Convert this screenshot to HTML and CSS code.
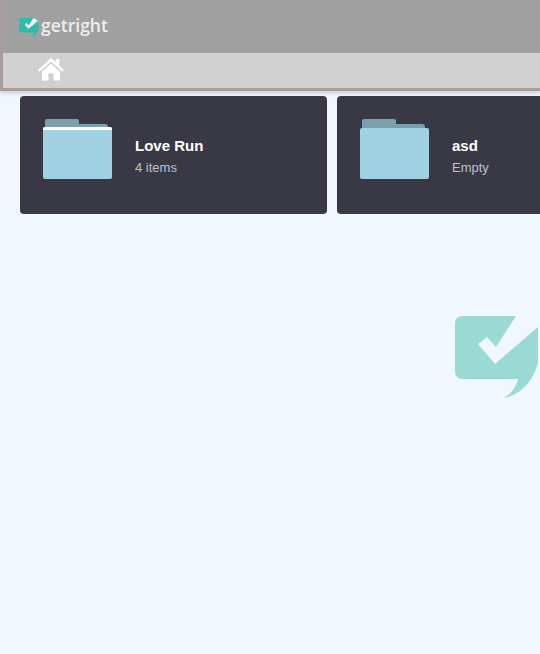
FILE: index.html
```html
<!DOCTYPE html>
<html lang="en">
<head>
<meta charset="utf-8">
<title>getright</title>
<link rel="stylesheet" href="styles.css">
</head>
<body>
<header class="top">
  <div class="brand">
    <svg class="brand-mark" viewBox="455 316 85 82" aria-hidden="true"><path class="brand-tick" d="M478 344 487 337 496 347 516 316 540 330 495 364Z"/><path d="M463 316H516L496 347 487 337 478 344 495 364 538 327V362C534 380 522 394 504 398 512 393 516 387 518 379H463Q455 379 455 371V324Q455 316 463 316Z"/></svg>
    <span class="brand-name">getright</span>
  </div>
  <nav class="crumbs">
    <svg class="home" viewBox="0 0 28 24" aria-hidden="true"><path d="M14 1 1 13l1.600 1.800L14 4.400l11.400 10.400L27 13l-4.600-4.200V2h-3.600v3.500Z"/><path d="M14 6.500 5 14.700V23.500h6.500V16.500h5V23.500H23V14.700Z"/></svg>
  </nav>
</header>
<main class="grid">
  <article class="card">
    <svg class="folder" viewBox="0 0 69 60" aria-hidden="true"><path class="folder-back" d="M2 6V2Q2 0 4 0H34Q36 0 36 2V5H62Q65 5 65 8V12H2Z"/><rect class="folder-front" x="0" y="8" width="69" height="52" rx="2"/><path class="folder-shine" d="M0 11V10Q0 8 2 8H67Q69 8 69 10V11Z"/></svg>
    <div class="info"><h2 class="name">Love Run</h2><p class="count">4 items</p></div>
  </article>
  <article class="card">
    <svg class="folder" viewBox="0 0 69 60" aria-hidden="true"><path class="folder-back" d="M2 6V2Q2 0 4 0H34Q36 0 36 2V5H62Q65 5 65 8V12H2Z"/><rect class="folder-front" x="0" y="9" width="69" height="51" rx="2"/></svg>
    <div class="info"><h2 class="name">asd</h2><p class="count">Empty</p></div>
  </article>
</main>
<svg class="watermark" viewBox="455 316 85 82" aria-hidden="true"><path d="M463 316H516L496 347 487 337 478 344 495 364 538 327V362C534 380 522 394 504 398 512 393 516 387 518 379H463Q455 379 455 371V324Q455 316 463 316Z"/></svg>
</body>
</html>
```
FILE: styles.css
```css
* { box-sizing: border-box; }
html, body { margin: 0; height: 100%; overflow: hidden; }
body { position: relative; background: #f0f7ff; font-family: "Liberation Sans", Arial, sans-serif; }

.top { border-style: solid; border-color: #a89e9e; border-width: 1px 0 3px 3px; box-shadow: 0 2px 4px rgba(120,120,120,.35); }
.brand { height: 50px; background: #a0a0a0; display: flex; align-items: center; padding: 0 0 0 16px; }
.brand-mark { width: 20px; height: 19px; fill: #2cbcab; flex: none; margin-top: 2px; }
.brand-tick { fill: #e8f4f2; }
.brand-name { font-family: "Open Sans", sans-serif; font-weight: 600; font-size: 17.500px; color: #eeeeee; margin: 0 0 3px 2px; line-height: 20px; }
.crumbs { height: 37px; background: #d0d0d0; border-top: 2px solid #a89e9e; display: flex; align-items: center; padding: 0 0 3px 34px; }
.home { width: 28px; height: 24px; fill: #ffffff; }

.grid { display: flex; gap: 10px; padding: 5px 0 0 20px; }
.card { flex: none; width: 307px; height: 118px; background: #393945; border-radius: 4px; display: flex; align-items: flex-start; padding: 23px 0 0 23px; }
.folder { width: 69px; height: 60px; flex: none; }
.folder-back { fill: #7ba0ab; }
.folder-front { fill: #a0d2e3; }
.folder-shine { fill: #ffffff; }
.info { margin-left: 23px; padding-top: 18px; }
.name { margin: 0; font-size: 15px; font-weight: 700; color: #ffffff; line-height: 17px; }
.count { margin: 6px 0 0; font-size: 13px; color: #b9c3cd; line-height: 16px; }

.watermark { position: absolute; left: 455px; top: 316px; width: 85px; height: 82px; fill: #9adad5; }
```
